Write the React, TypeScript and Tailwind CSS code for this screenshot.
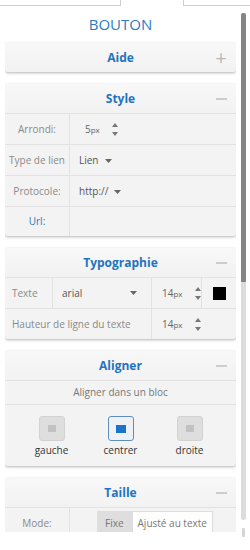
import type { ReactNode } from "react";

const font = { fontFamily: '"Open Sans", "Liberation Sans", sans-serif' };

function Spinner() {
  return (
    <div className="flex flex-col items-center gap-[5px] ml-[12px]">
      <svg width="6" height="4" viewBox="0 0 6 4"><path d="M0 4 L3 0 L6 4 Z" fill="#777" /></svg>
      <svg width="6" height="4" viewBox="0 0 6 4"><path d="M0 0 L3 4 L6 0 Z" fill="#777" /></svg>
    </div>
  );
}

function Caret() {
  return (
    <svg width="7" height="4" viewBox="0 0 7 4" className="ml-[6px] mt-[2px]">
      <path d="M0 0 L3.5 4 L7 0 Z" fill="#666" />
    </svg>
  );
}

function Px({ v }: { v: string }) {
  return (
    <span className="text-[10px] text-[#666]">
      {v}
      <span className="text-[8px]">px</span>
    </span>
  );
}

function Panel({ title, open = true, children }: { title: string; open?: boolean; children?: ReactNode }) {
  return (
    <div className="bg-[#f3f3f3] rounded-[3px] shadow-[0_1px_3px_rgba(0,0,0,0.3)] overflow-hidden">
      <div className="h-[29px] flex items-center bg-gradient-to-b from-[#f8f8f8] to-[#f2f2f2]">
        <div className="w-[30px]" />
        <div className="flex-1 text-center text-[12px] font-bold text-[#1f74c0]">{title}</div>
        <div className="w-[30px] flex items-center justify-center">
          {open ? (
            <div className="w-[11px] h-[2px] bg-[#cdcdcd]" />
          ) : (
            <span className="text-[20px] leading-none text-[#b8b8b8]">+</span>
          )}
        </div>
      </div>
      {children}
    </div>
  );
}

function Row({ label, blue, children, h = "h-[31px]" }: { label: string; blue?: boolean; children?: ReactNode; h?: string }) {
  return (
    <div className={`flex border-t border-[#e2e2e2] ${h}`}>
      <div className={`w-[65px] border-r border-[#e2e2e2] flex items-center justify-center text-[10px] ${blue ? "text-[#2a7bc4]" : "text-[#8a8a8a]"}`}>
        {label}
      </div>
      <div className="flex-1 flex items-center pl-[9px] text-[10px] text-[#555]">{children}</div>
    </div>
  );
}

function AlignIcon({ label, active }: { label: string; active?: boolean }) {
  return (
    <div className="flex flex-col items-center">
      <div
        className={`w-[26px] h-[25px] rounded-[3px] flex items-center justify-center border ${
          active ? "border-[#5d8fbe] bg-[#eef2f6]" : "border-[#d2d2d2] bg-[#dedede]"
        }`}
      >
        <div className={active ? "w-[10px] h-[8px] bg-[#1a74c7]" : "w-[8px] h-[7px] bg-[#c2c2c2]"} />
      </div>
      <div className="mt-[2px] text-[10px] text-[#333]">{label}</div>
    </div>
  );
}

export default function App() {
  return (
    <div className="w-[250px] h-[550px] bg-white overflow-hidden" style={font}>
      <div className="flex h-[6px]">
        <div className="w-[121px] border-b border-r border-[#cfcfcf]" />
        <div className="w-[62px]" />
        <div className="flex-1 border-b border-l border-[#cfcfcf]" />
      </div>
      <div className="flex">
        <div className="w-[231px] ml-[5px] h-[526px] overflow-hidden">
          <div className="h-[37px] flex items-center justify-center text-[15px] text-[#2a7bc4]">BOUTON</div>
          <div className="flex flex-col gap-[12px]">
            <Panel title="Aide" open={false} />
            <Panel title="Style">
              <Row label="Arrondi:">
                <div className="flex items-center pl-[6px]">
                  <Px v="5" />
                  <Spinner />
                </div>
              </Row>
              <Row label="Type de lien">
                Lien <Caret />
              </Row>
              <Row label="Protocole:">
                http:// <Caret />
              </Row>
              <Row label="Url:" blue h="h-[30px]" />
            </Panel>
            <Panel title="Typographie">
              <div className="flex h-[31px] border-t border-[#e2e2e2] text-[10px]">
                <div className="w-[48px] border-r border-[#e2e2e2] flex items-center pl-[7px] text-[#8a8a8a]">Texte</div>
                <div className="w-[99px] border-r border-[#e2e2e2] flex items-center justify-between pl-[9px] pr-[14px] text-[#555]">
                  arial
                  <svg width="7" height="4" viewBox="0 0 7 4"><path d="M0 0 L3.5 4 L7 0 Z" fill="#666" /></svg>
                </div>
                <div className="w-[50px] border-r border-[#e2e2e2] flex items-center pl-[10px]">
                  <Px v="14" />
                  <Spinner />
                </div>
                <div className="flex-1 flex items-center justify-center">
                  <div className="w-[13px] h-[13px] bg-black" />
                </div>
              </div>
              <div className="flex h-[31px] border-t border-[#e2e2e2] text-[10px]">
                <div className="w-[147px] border-r border-[#e2e2e2] flex items-center pl-[7px] text-[#8a8a8a]">
                  Hauteur de ligne du texte
                </div>
                <div className="w-[50px] flex items-center pl-[10px]">
                  <Px v="14" />
                  <Spinner />
                </div>
              </div>
            </Panel>
            <Panel title="Aligner">
              <div className="h-[25px] border-t border-b border-[#e2e2e2] flex items-center justify-center text-[10px] text-[#777]">
                Aligner dans un bloc
              </div>
              <div className="grid grid-cols-3 px-[12px] pt-[11px] pb-[8px]">
                <AlignIcon label="gauche" />
                <AlignIcon label="centrer" active />
                <AlignIcon label="droite" />
              </div>
            </Panel>
            <Panel title="Taille">
              <div className="flex h-[31px] border-t border-[#e2e2e2]">
                <div className="w-[65px] border-r border-[#e2e2e2] flex items-start justify-center text-[10px] text-[#8a8a8a] pt-[8px]">
                  Mode:
                </div>
                <div className="flex-1 flex items-start pl-[27px] pt-[3px] text-[10px] text-[#777]">
                  <div className="h-[24px] px-[8px] bg-[#dedede] flex items-center">Fixe</div>
                  <div className="h-[24px] px-[5px] bg-white border border-[#dcdcdc] flex items-center">Ajusté au texte</div>
                </div>
              </div>
            </Panel>
          </div>
        </div>
        <div className="ml-[5px] w-[5px] flex flex-col items-center pt-[7px]">
          <div className="w-[5px] h-[269px] bg-[#858585] rounded-t-[2px]" />
          <div className="w-[5px] h-[238px] bg-[#dcdcdc] rounded-b-[3px]" />
          <div className="w-[3px] h-[9px] mt-[8px] bg-[#d6d6d6] rounded-[1px]" />
        </div>
      </div>
    </div>
  );
}
